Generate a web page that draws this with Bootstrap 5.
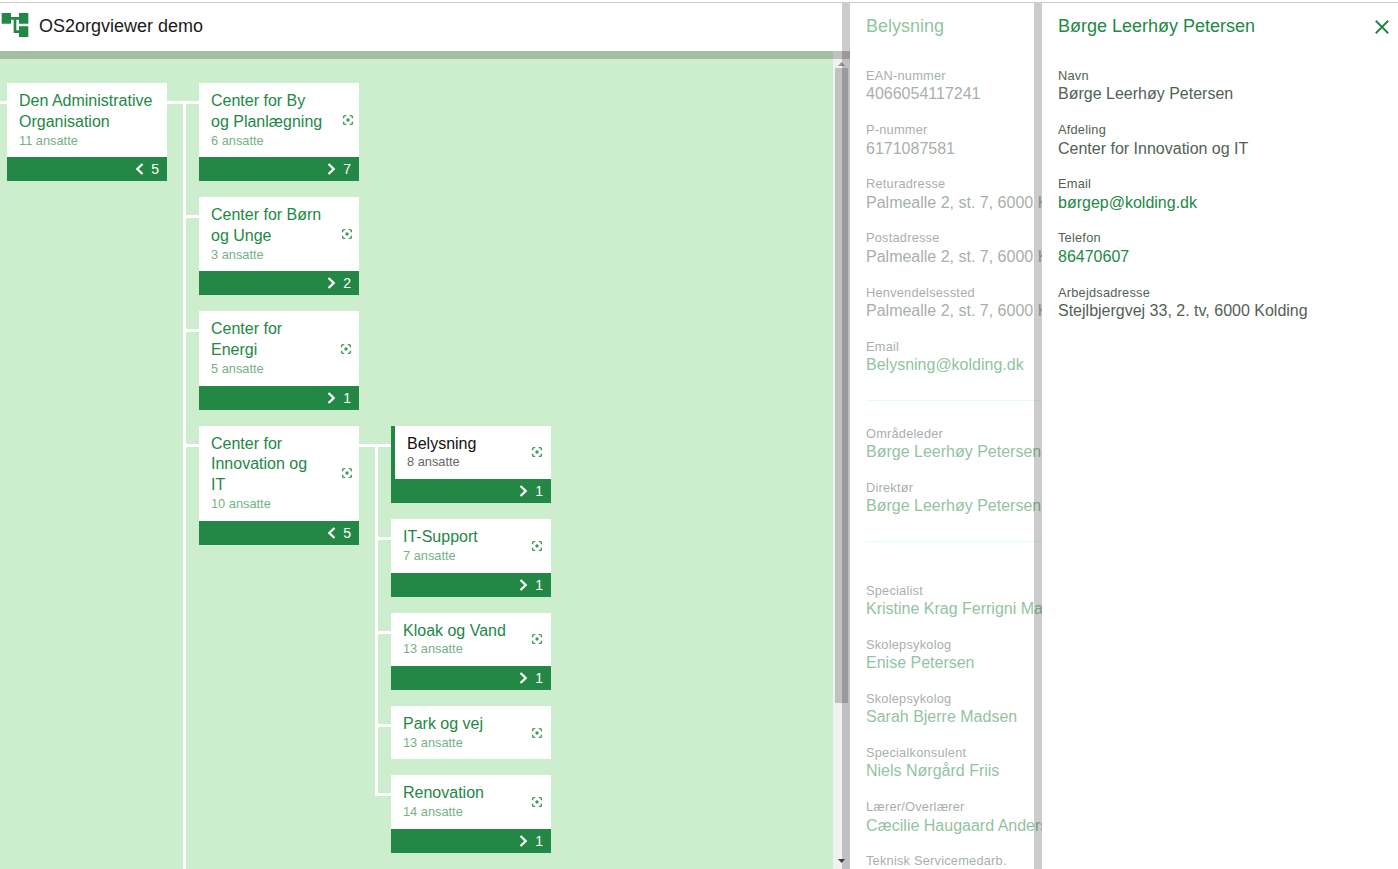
<!DOCTYPE html>
<html lang="da">
<head>
<meta charset="utf-8">
<meta name="viewport" content="width=device-width, initial-scale=1">
<title>OS2orgviewer demo</title>
<link rel="stylesheet" href="https://cdn.jsdelivr.net/npm/bootstrap@5.3.0/dist/css/bootstrap.min.css">
<style>
:root{--green:#238845;--pale:#cdeecd;--shade:rgba(0,0,0,.2)}
body{font-family:"Liberation Sans",Arial,sans-serif;font-size:16px;line-height:1.3;color:#526155;height:869px;padding-top:2px}
a{color:var(--green);text-decoration:none}
.viewer{border-top:1px solid #ccc}
.viewer-head{height:48px;box-shadow:0 8px 0 var(--shade);z-index:2;color:#1a1a1a}
.viewer-head svg{margin:-4px 0 0 -1px}
.viewer-title{font-size:18px;margin:0 0 0 8px}
.tree-pane{width:850px}
.tree-area{background:var(--pale)}
.tree{padding:32px 0 0 7px}
.branch{position:relative;margin-left:32px;display:flex;flex-direction:column;gap:16px}
.unit{position:relative;display:flex;align-items:flex-start}
.unit::before{content:"";position:absolute;left:-16px;top:18px;width:16px;height:3px;background:#fff}
.branch>.unit:not(:last-child)::after{content:"";position:absolute;left:-16px;top:18px;bottom:-35px;width:3px;background:#fff}
.branch::before{content:"";position:absolute;left:-32px;top:18px;width:18px;height:3px;background:#fff}
.unit-box{width:160px;background:#fff;flex:none}
.unit-body{padding:8px 7px 8px 12px}
.unit-name{color:var(--green);white-space:nowrap}
.unit-count{font-size:12.8px;color:#74b188}
.unit-foot{height:24px;background:var(--green);color:#fff;font-size:14px;line-height:24px;padding-right:8px}
.unit-foot svg{margin-right:7px}
.picked{border-left:4px solid var(--green)}
.picked .unit-name{color:#111}
.picked .unit-count{color:#666}
.scroller{width:17px;background:#f1f1f1;padding:8px 2px 0}
.scroller-thumb{width:13px;height:635px;background:#c1c1c1}
.side{background:#fff;position:relative;box-shadow:-8px 0 0 var(--shade);padding:0 16px}
.side-unit{width:192px;z-index:3}
.side-person{z-index:4}
.side-title{font-size:18px;height:48px;line-height:46px;color:var(--green)}
.faded{opacity:.5}
.fields{padding-top:16px;white-space:nowrap}
.fields dt{font-size:12.8px;font-weight:400;line-height:17.1px;letter-spacing:.22px}
.fields dd{margin:0 0 16.050px;line-height:21px;position:relative;top:-.7px}
.rule{height:1px;background:#c4ffc4;margin:24px -16px 24px 0}
.rule-wide{margin-bottom:39.500px}
.close-mark{margin-right:-7px}
</style>
</head>
<body class="overflow-hidden bg-white">
<div class="viewer d-flex h-100">
  <main class="tree-pane d-flex flex-column flex-shrink-0">
    <header class="viewer-head d-flex align-items-center flex-shrink-0 bg-white position-relative">
      <svg width="32" height="32" viewBox="0 0 24 24" fill="#238845"><path d="M22 11V3h-7v3H9V3H2v8h7V8h2v10h4v3h7v-8h-7v3h-2V8h2v3z"/></svg>
      <span class="viewer-title">OS2orgviewer demo</span>
    </header>
    <div class="tree-area d-flex flex-grow-1 overflow-hidden">
      <div class="tree flex-grow-1" id="tree"></div>
      <div class="scroller d-flex flex-column">
        <svg width="13" height="9" viewBox="0 0 13 9"><path d="M3 7h7L6.500 3z" fill="#999"/></svg>
        <div class="scroller-thumb"></div>
        <svg class="mt-auto" width="13" height="14" viewBox="0 0 13 14"><path d="M3 4h7L6.500 8z" fill="#444"/></svg>
      </div>
    </div>
  </main>
  <aside class="side side-unit flex-shrink-0">
    <div class="faded">
      <div class="side-title">Belysning</div>
      <dl class="fields m-0">
        <dt>EAN-nummer</dt><dd>4066054117241</dd>
        <dt>P-nummer</dt><dd>6171087581</dd>
        <dt>Returadresse</dt><dd>Palmealle 2, st. 7, 6000 K</dd>
        <dt>Postadresse</dt><dd>Palmealle 2, st. 7, 6000 K</dd>
        <dt>Henvendelsessted</dt><dd>Palmealle 2, st. 7, 6000 K</dd>
        <dt>Email</dt><dd><a href="#">Belysning@kolding.dk</a></dd>
      </dl>
      <div class="rule"></div>
      <dl class="fields m-0 pt-0">
        <dt>Områdeleder</dt><dd><a href="#">Børge Leerhøy Petersen</a></dd>
        <dt>Direktør</dt><dd><a href="#">Børge Leerhøy Petersen</a></dd>
      </dl>
      <div class="rule rule-wide"></div>
      <dl class="fields m-0 pt-0">
        <dt>Specialist</dt><dd><a href="#">Kristine Krag Ferrigni Ma</a></dd>
        <dt>Skolepsykolog</dt><dd><a href="#">Enise Petersen</a></dd>
        <dt>Skolepsykolog</dt><dd><a href="#">Sarah Bjerre Madsen</a></dd>
        <dt>Specialkonsulent</dt><dd><a href="#">Niels Nørgård Friis</a></dd>
        <dt>Lærer/Overlærer</dt><dd><a href="#">Cæcilie Haugaard Anders</a></dd>
        <dt>Teknisk Servicemedarb.</dt>
      </dl>
    </div>
  </aside>
  <aside class="side side-person flex-grow-1">
    <div class="d-flex justify-content-between align-items-center">
      <div class="side-title">Børge Leerhøy Petersen</div>
      <svg class="close-mark" width="14" height="14" viewBox="0 0 14 14" stroke="#238845" stroke-width="2"><path d="M.8.8l12.400 12.400M13.200.8L.8 13.200"/></svg>
    </div>
    <dl class="fields m-0">
      <dt>Navn</dt><dd>Børge Leerhøy Petersen</dd>
      <dt>Afdeling</dt><dd>Center for Innovation og IT</dd>
      <dt>Email</dt><dd><a href="#">børgep@kolding.dk</a></dd>
      <dt>Telefon</dt><dd><a href="#">86470607</a></dd>
      <dt>Arbejdsadresse</dt><dd>Stejlbjergvej 33, 2. tv, 6000 Kolding</dd>
    </dl>
  </aside>
</div>
<script src="https://cdn.jsdelivr.net/npm/bootstrap@5.3.0/dist/js/bootstrap.bundle.min.js"></script>
<script>
const org = {name:'Den Administrative<br>Organisation', staff:11, sub:5, root:true, units:[
  {name:'Center for By<br>og Planlægning', staff:6, sub:7, shift:3},
  {name:'Center for Børn<br>og Unge', staff:3, sub:2, shift:2},
  {name:'Center for<br>Energi', staff:5, sub:1, shift:1},
  {name:'Center for<br>Innovation og<br>IT', staff:10, sub:5, shift:2, units:[
    {name:'Belysning', staff:8, sub:1, picked:true},
    {name:'IT-Support', staff:7, sub:1},
    {name:'Kloak og Vand', staff:13, sub:1},
    {name:'Park og vej', staff:13},
    {name:'Renovation', staff:14, sub:1}
  ]},
  null
]};
const focus = s => `<svg width="14" height="14" viewBox="0 0 24 24" opacity=".85" style="margin-right:${-s}px"><path fill="none" stroke="#238845" stroke-width="2.500" d="M4.500 9V6.500a2 2 0 0 1 2-2H9M15 4.500h2.500a2 2 0 0 1 2 2V9M19.500 15v2.500a2 2 0 0 1-2 2H15M9 19.500H6.500a2 2 0 0 1-2-2V15"/><circle cx="12" cy="12" r="3" fill="#238845"/></svg>`;
const arrow = open => `<svg width="9" height="12" viewBox="0 0 9 12" fill="none" stroke="#fff" stroke-width="2.300"><path d="${open ? 'M7.500 1L2.300 6l5.200 5' : 'M1.500 1l5.200 5-5.200 5'}"/></svg>`;
function unit(u){
  // a null entry is an off-screen unit: only its connector is needed
  if (!u) return '<div class="unit"></div>';
  return `<div class="unit"><div class="unit-box${u.picked ? ' picked' : ''}">
    <div class="unit-body d-flex justify-content-between align-items-center"><div><div class="unit-name">${u.name}</div><div class="unit-count">${u.staff} ansatte</div></div>${u.root ? '' : focus(u.shift || 0)}</div>
    ${u.sub ? `<div class="unit-foot d-flex justify-content-end align-items-center">${arrow(!!u.units)}<span>${u.sub}</span></div>` : ''}
  </div>${u.units ? `<div class="branch">${u.units.map(unit).join('')}</div>` : ''}</div>`;
}
document.getElementById('tree').innerHTML = unit(org);
</script>
</body>
</html>
